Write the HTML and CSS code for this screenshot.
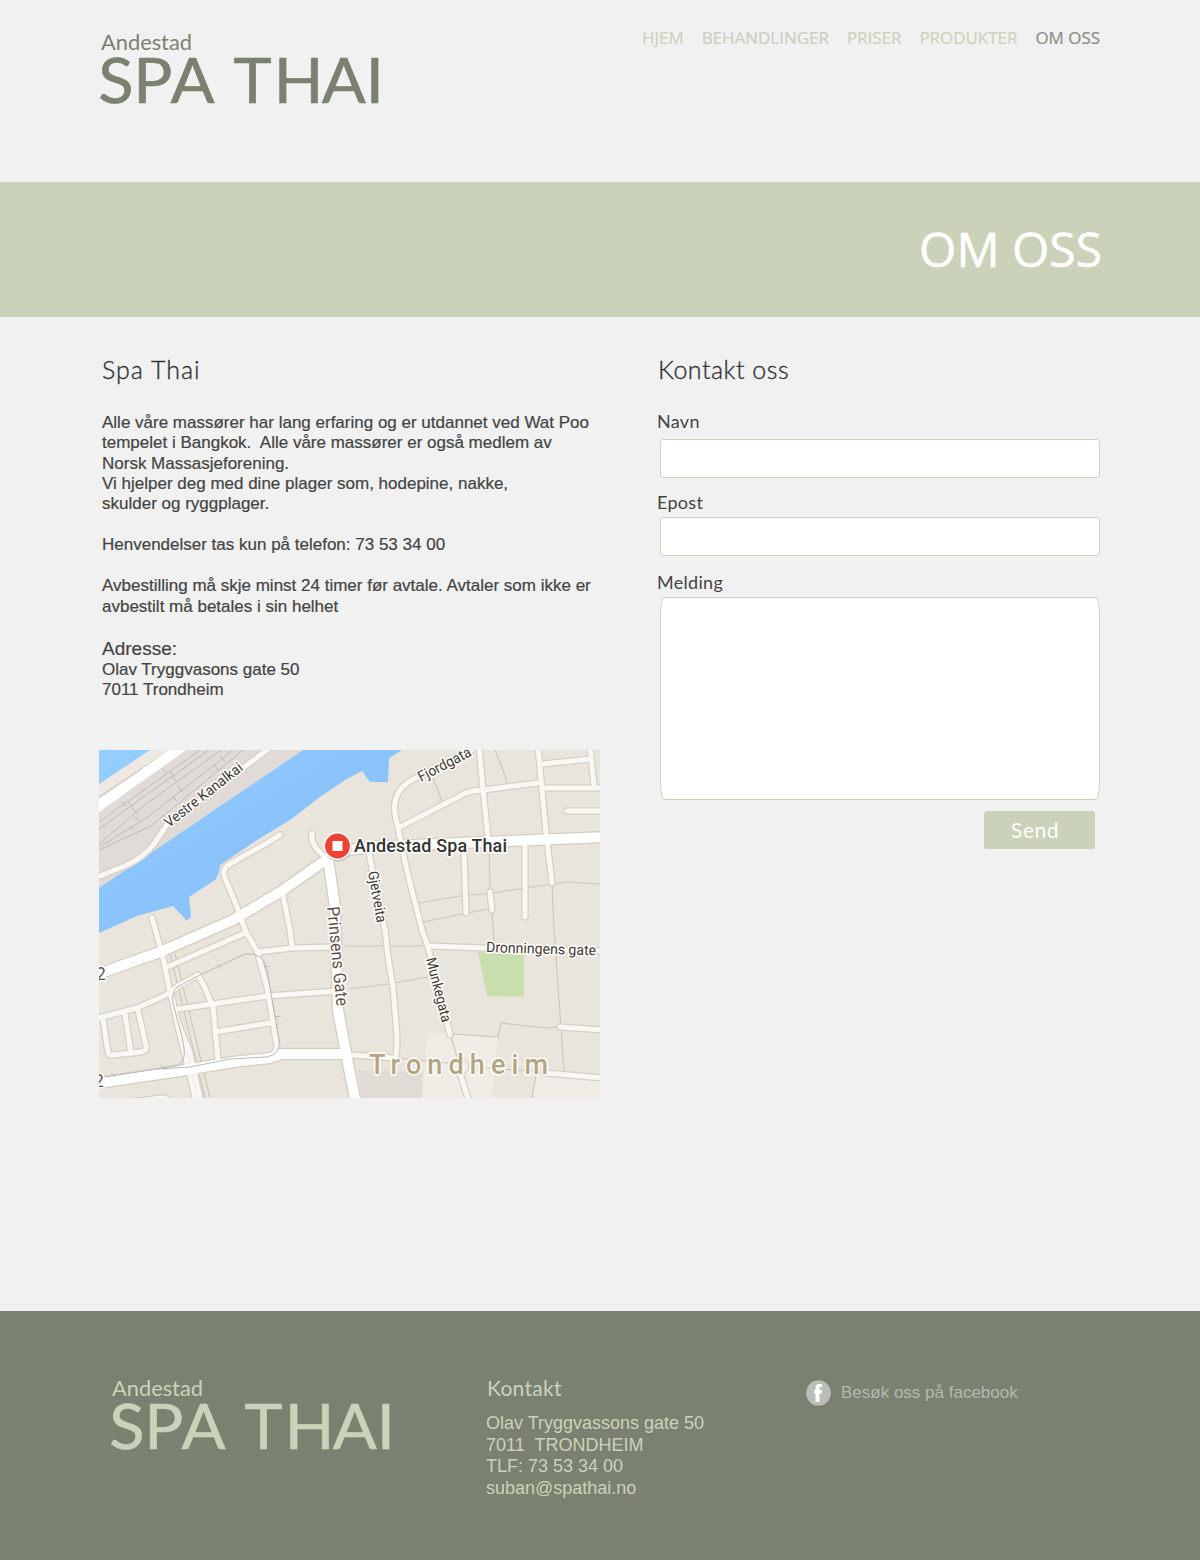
FILE: index.html
```html
<!DOCTYPE html>
<html lang="no">
<head>
<meta charset="utf-8">
<title>Om oss – Andestad Spa Thai</title>
<link rel="stylesheet" href="styles.css">
</head>
<body>
<header class="header">
  <svg class="logo" width="290" height="84" viewBox="0 0 290 84" role="img" aria-label="Andestad Spa Thai">
    <text class="logo-small" x="3" y="23" textLength="91" lengthAdjust="spacingAndGlyphs">Andestad</text>
    <text class="logo-big" transform="scale(1.05 1)" y="76" x="0.300 33.500 69 128.700 167.500 213 255">SPATHAI</text>
  </svg>
  <nav class="nav">
    <a>HJEM</a><a class="nav-muted">BEHANDLINGER</a><a>PRISER</a><a>PRODUKTER</a><a class="current">OM OSS</a>
  </nav>
</header>
<div class="banner"><h1>OM OSS</h1></div>
<main class="main">
  <section class="about">
    <h2>Spa Thai</h2>
    <p>Alle våre massører har lang erfaring og er utdannet ved Wat Poo<br>tempelet i Bangkok.&nbsp; Alle våre massører er også medlem av<br>Norsk Massasjeforening.<br>Vi hjelper deg med dine plager som, hodepine, nakke,<br>skulder og ryggplager.</p>
    <p>Henvendelser tas kun på telefon: 73 53 34 00</p>
    <p>Avbestilling må skje minst 24 timer før avtale. Avtaler som ikke er<br>avbestilt må betales i sin helhet</p>
    <h3>Adresse:</h3>
    <p class="address">Olav Tryggvasons gate 50<br>7011 Trondheim</p>
    <svg class="map" width="501" height="348" viewBox="0 0 501 348">
      <defs>
        <linearGradient id="water" x1="0" y1="0" x2="1" y2="1"><stop offset="0" stop-color="#95ceff"/><stop offset=".5" stop-color="#8ac3fb"/><stop offset="1" stop-color="#93cbff"/></linearGradient>
        <g id="streets">
          <path d="M-4 128L28 115Q45 107 55 94L67 76L144 18L172 -3"/>
          <path d="M181 85L168 93L131 114Q122 119 126 128L138 157L146 180L158 201L168 237L178 297Q177 304 171 308"/>
          <path d="M213 83Q211 95 224 105"/>
          <path d="M183 140L191 180L193 197"/>
          <path d="M53 168L63 203L71 242L79 273L91 303L102 352"/>
          <path d="M73 247L79 277L89 317L97 352"/>
          <path d="M68 217L146 183"/>
          <path d="M159 202L193 198L234 197"/>
          <path d="M-4 269L38 258L71 243L79 236L99 225L106 238L114 257L119 310"/>
          <path d="M79 259L114 254L168 246L238 241"/>
          <path d="M116 282L176 272"/>
          <path d="M4 269L9 302Q10 306 14 305L42 302Q48 301 47 296L39 260"/>
          <path d="M26 264L32 303"/>
          <path d="M0 356L55 349Q68 346 70 352"/>
          <path d="M378 -3L319 27Q288 40 298 73L304 103L311 133L323 180L329 197L351 285"/>
          <path d="M301 77L367 43Q371 41 384 40L439 33"/>
          <path d="M380 -4L384 40L389 87"/>
          <path d="M439 -4L443 40L447 83L453 133"/>
          <path d="M443 14L492 9M491 -4L495 36M443 38H505M468 61H505"/>
          <path d="M365 102L367 163M391 142L393 160M426 93V167"/>
          <path d="M270 103L274 123L286 180L289 207L294 237L298 287Q298 307 296 308L254 305"/>
          <path d="M329 196L386 198L505 201M461 277L505 280M446 323L505 328"/>
          <path d="M361 323L370 352"/>
        </g>
        <g id="mainroads">
          <path d="M-6 226L24 215L61 202L134 170L181 142L224 112L238 102L270 97L361 93L507 87"/>
          <path d="M229 108L236 157L239 260L247 303L257 354"/>
          <path d="M6 332L81 321L134 312L171 308L181 304H244"/>
        </g>
      </defs>
      <rect width="501" height="348" fill="#e9e4dc"/>
      <path fill="#e0dbd6" d="M51 0H204L0 138V34Z"/>
      <path fill="#eeeae3" d="M51 0H70L0 54V34Z"/>
      <path fill="url(#water)" d="M0 0H51L0 34ZM204 0L0 138V183L38 166L74 156L88 171L92 167L90 147L116 130Q120 126 121 115L158 90L191 70L221 47L246 30L263 21L271 32H289L290 8L303 0Z"/>
      <path fill="#c8dfad" d="M379 202L425 205V247L388 246Z"/>
      <path fill="#f0ece5" d="M329 283L399 287L393 348H323ZM437 325L501 329V348H433Z"/>
      <path fill="#e0dbd5" d="M259 320L323 322V348H263Z"/>
      <g class="rail">
        <path d="M0 72L101 0M0 79L43 48L110 0M0 94L43 57L122 0M0 97L49 67L134 0M0 100L52 76L144 0"/>
        <path d="M22 51l4 5M29 52l5 5M34 58l4 6M36 66l4 5M31 76l5 5M63 18l5 5M71 21l5 6M73 26l5 6M79 36l4 6M74 46l4 6M115 15l5 6M121 6l5 6"/>
      </g>
      <path class="lane" d="M319 153L361 146L393 143L453 134L468 132L501 134M324 172L389 159M390 93L391 142M393 160L395 193M453 133L455 180L462 277L465 322M396 0L404 20L408 33M334 28L343 51M246 196H329M249 239L289 234L329 227M354 284L399 287L402 273L446 278L461 277M352 287L359 310M298 308L359 314L386 318L446 322M437 325L433 348M71 203L106 348M76 203L111 348"/>
      <use href="#streets" class="casing"/>
      <use href="#mainroads" class="main-casing"/>
      <path class="lane" d="M0 47L71 0"/>
      <path d="M-10 63L94 -11" stroke="#fff" stroke-width="10"/>
      <use href="#streets" class="street"/>
      <use href="#mainroads" class="mainroad"/>
      <circle cx="362" cy="316" r="8" fill="#f0ece5" stroke="#d3ccc0"/>
      <path class="rail" d="M6 327L64 318L79 315Q87 311 85 298L83 287L74 253Q72 243 78 237L101 225L146 204Q165 202 168 220L180 290Q182 304 168 307L131 309L91 317L58 319M119 214l4 5M62 315l4 5M12 323l4 4M165 217l6-1M176 267l6-1"/>
      <g class="label">
        <text transform="translate(70 78) rotate(-38)" textLength="95" lengthAdjust="spacingAndGlyphs">Vestre Kanalkai</text>
        <text transform="translate(322 32) rotate(-27.5)" textLength="58" lengthAdjust="spacingAndGlyphs">Fjordgata</text>
        <text transform="translate(269 122) rotate(80)" textLength="52" lengthAdjust="spacingAndGlyphs">Gjetveita</text>
        <text transform="translate(327 209) rotate(76)" textLength="66" lengthAdjust="spacingAndGlyphs">Munkegata</text>
        <text transform="translate(387 202) rotate(1.7)" textLength="110" lengthAdjust="spacingAndGlyphs">Dronningens gate</text>
        <text class="wide" transform="translate(228 157) rotate(84.5)" textLength="100" lengthAdjust="spacingAndGlyphs">Prinsens Gate</text>
        <text class="wide" x="-3" y="230">2</text>
        <text class="wide" x="-5" y="337">2</text>
        <text class="city" x="270" y="324" textLength="179">Trondheim</text>
        <text class="place" x="255" y="102" textLength="153">Andestad Spa Thai</text>
      </g>
      <circle cx="239" cy="97.500" r="14" fill="#b9b3aa" opacity=".6"/>
      <circle cx="238.500" cy="96" r="13.200" fill="#ef4136" stroke="#fff" stroke-width="1.500"/>
      <rect x="233.500" y="91" width="10" height="10" fill="#fff"/>
    </svg>
  </section>
  <form class="contact">
    <h2>Kontakt oss</h2>
    <label for="navn">Navn</label>
    <input id="navn" type="text">
    <label for="epost">Epost</label>
    <input id="epost" type="text">
    <label for="melding">Melding</label>
    <textarea id="melding"></textarea>
    <button type="button">Send</button>
  </form>
</main>
<footer class="footer">
  <svg class="logo" width="290" height="84" viewBox="0 0 290 84" role="img" aria-label="Andestad Spa Thai">
    <text class="logo-small" x="3" y="23" textLength="91" lengthAdjust="spacingAndGlyphs">Andestad</text>
    <text class="logo-big" transform="scale(1.05 1)" y="76" x="0.300 33.500 69 128.700 167.500 213 255">SPATHAI</text>
  </svg>
  <section class="footer-contact">
    <h4>Kontakt</h4>
    <p>Olav Tryggvassons gate 50<br>7011&nbsp; TRONDHEIM<br>TLF: 73 53 34 00<br>suban@spathai.no</p>
  </section>
  <a class="facebook">
    <svg width="25" height="26" viewBox="0 0 25 26"><ellipse cx="12.500" cy="13" rx="12.300" ry="12.700" fill="#b9beb8"/><path fill="#fff" d="M9.500 22V13.500H8V10H9.500V8Q9.500 4 13 4H16V7H14.500Q13.500 7 13.500 8.500V10H16L15.600 13.500H13.500V22Z"/></svg>
    <span>Besøk oss på facebook</span>
  </a>
</footer>
</body>
</html>
```
FILE: styles.css
```css
* { box-sizing: border-box; margin: 0; padding: 0; }
body { width: 1200px; background: #f1f1f1; color: #444; font-family: "Liberation Sans", Arial, sans-serif; }
h1, h2, h3, h4 { font-weight: 400; }

.header { height: 182px; padding: 27px 100px 0 98px; display: flex; justify-content: space-between; align-items: flex-start; fill: #7a8170; stroke: #7a8170; }
.logo { display: block; flex: none; }
.logo-small { font: 21.500px Lato, sans-serif; stroke-width: 0; }
.logo-big { font: 62px Lato, sans-serif; stroke-width: .6px; }
.nav { display: flex; gap: 18px; margin-top: -1px; font: 16.950px/24px "Open Sans", sans-serif; color: #ccd3bb; white-space: nowrap; -webkit-text-stroke: .2px; }
.nav-muted { color: #cbcfc0; }
.current { color: #8b8e84; }

.banner { height: 135px; background: #cbd2ba; display: flex; justify-content: flex-end; align-items: center; padding: 0 98px 1px 0; }
.banner h1 { font: 48px/60px "Open Sans", sans-serif; color: #fff; -webkit-text-stroke: .5px; }

.main { height: 994px; padding: 37px 100px 0 102px; display: flex; justify-content: space-between; }
.about { width: 500px; font-size: 17px; line-height: 20.45px; white-space: nowrap; -webkit-text-stroke: .2px; }
h2 { font: 300 25px/30px Lato, sans-serif; color: #333; letter-spacing: .5px; -webkit-text-stroke: .35px; }
.about h2 { margin-bottom: 28.600px; letter-spacing: 1px; }
.about p { margin-bottom: 20.45px; }
.about h3 { font-size: 19px; line-height: 22px; margin-top: 20px; }
.about .address { margin-bottom: 49.400px; }
.map { display: block; margin-left: -3px; overflow: hidden; fill: none; -webkit-text-stroke: 0; }
.casing, .main-casing, .street, .mainroad { stroke-linecap: round; stroke-linejoin: round; }
.casing { stroke: #d6cfc4; stroke-width: 7.500px; }
.street { stroke: #f9f7f3; stroke-width: 5px; }
.main-casing { stroke: #d6cdc0; stroke-width: 12.500px; }
.mainroad { stroke: #fff; stroke-width: 10px; }
.rail { stroke: #b9b9b9; stroke-width: 1px; fill: none; }
.lane { stroke: #cdc7bb; stroke-width: 1.200px; fill: none; }
.label { font: 14.500px Roboto, sans-serif; fill: #40372f; }
.label text { stroke: #fff; stroke-width: 3px; stroke-linejoin: round; paint-order: stroke; }
.label .wide { font-size: 17.500px; fill: #5d534a; }
.label .city { font-size: 27px; font-weight: 500; fill: #b5a482; }
.label .place { font-size: 18px; font-weight: 500; fill: #333; }

.contact { width: 443px; display: flex; flex-direction: column; }
.contact h2 { margin: 0 0 25px 1px; }
.contact label { font: 18px/24px Lato, sans-serif; color: #444; letter-spacing: .3px; }
.contact input, .contact textarea { display: block; width: 440px; margin-left: 3px; background: #fff; border: 1px solid #cbd2ba; border-radius: 3px; resize: none; outline: 0; }
.contact input { height: 39px; margin-top: 6px; margin-bottom: 12px; }
.contact #epost { margin-top: 3px; margin-bottom: 14px; }
.contact textarea { height: 203px; margin-top: 3px; border-radius: 4px / 18px; }
.contact button { align-self: flex-end; width: 111px; height: 38px; margin: 11px 5px 0 0; padding-right: 9px; border: 0; border-radius: 3px; background: #cbd2ba; color: #fff; font: 21px/38px Lato, sans-serif; letter-spacing: .5px; }

.footer { height: 249px; background: #7a8170; fill: #cbd2ba; stroke: #cbd2ba; color: #cbd2ba; padding: 62px 100px 0 109px; display: flex; }
.footer-contact { width: 320px; margin-left: 87px; }
.footer-contact h4 { font: 21px/28px Lato, sans-serif; padding: 1px 0 0 1px; letter-spacing: .3px; }
.footer-contact p { margin-top: 11px; font-size: 18px; line-height: 21.700px; white-space: nowrap; }
.facebook { display: flex; gap: 10px; height: 26px; margin-top: 7px; align-items: center; font-size: 17px; color: #b3b9b1; white-space: nowrap; stroke: none; }
```
